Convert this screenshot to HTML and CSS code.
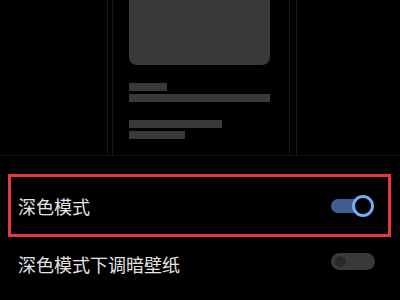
FILE: index.html
```html
<!DOCTYPE html>
<html lang="zh-CN">
<head>
    <meta charset="UTF-8">
    <title>深色模式</title>
    <link rel="stylesheet" href="styles.css">
</head>
<body>
    <!-- プレビュー -->
    <div class="preview">
        <div class="phone">
            <div class="screen">
                <div class="card"></div>
                <div class="bar bar-short"></div>
                <div class="bar bar-full"></div>
                <div class="bar bar-mid gap"></div>
                <div class="bar bar-small"></div>
            </div>
        </div>
    </div>

    <!-- 設定 -->
    <div class="settings">
        <div class="row highlight">
            <span class="label">深色模式</span>
            <div class="switch on"><span class="knob"></span></div>
        </div>
        <div class="row">
            <span class="label">深色模式下调暗壁纸</span>
            <div class="switch off"><span class="dot"></span></div>
        </div>
    </div>
</body>
</html>
```

FILE: styles.css
```css
body {
    margin: 0;
    padding: 0;
    width: 400px;
    height: 300px;
    overflow: hidden;
    background-color: #000;
    color: #e4e4e4;
    font-family: "Noto Sans CJK SC", "Noto Sans", sans-serif;
}

/* プレビュー */
.preview {
    height: 155px;
    border-bottom: 1px solid #101010;
    display: flex;
    padding-left: 107px;
}

.phone {
    width: 178px;
    border-left: 1px solid #1a1a1a;
    border-right: 1px solid #1a1a1a;
    padding: 0 6px 0 4px;
}

.screen {
    height: 100%;
    border-left: 1px solid #181818;
    border-right: 1px solid #181818;
    padding-left: 16px;
}

.card {
    width: 141px;
    height: 65px;
    background-color: #39393b;
    border-radius: 0 0 8px 8px;
}

.bar {
    height: 8px;
    background-color: #39393b;
    margin-top: 3px;
}

.bar-short {
    width: 38px;
    margin-top: 18px;
}

.bar-full {
    width: 141px;
}

.bar-mid {
    width: 93px;
}

.bar-small {
    width: 56px;
}

.bar.gap {
    margin-top: 18px;
}

/* 設定リスト */
.settings {
    padding: 18px 9px 0 8px;
}

.row {
    display: flex;
    align-items: center;
    justify-content: space-between;
    height: 54px;
    padding: 0 16px 0 10px;
}

.row.highlight {
    height: 57px;
    border: 3px solid #e8383d;
    padding: 0 14px 0 7px;
}

.label {
    font-size: 18px;
    line-height: 1;
}

/* スイッチ */
.switch {
    position: relative;
    width: 43px;
    height: 22px;
}

.switch.on::before {
    content: "";
    position: absolute;
    left: 0;
    top: 4px;
    width: 36px;
    height: 14px;
    border-radius: 7px;
    background-color: #3d5e8e;
}

.switch .knob {
    position: absolute;
    right: 0;
    top: 0;
    width: 16px;
    height: 16px;
    border: 3px solid #72acf2;
    border-radius: 50%;
    background-color: #000;
}

.switch.off {
    width: 44px;
    height: 17px;
    border-radius: 9px;
    background-color: #3a3a3a;
    margin-top: -5px;
}

.switch .dot {
    position: absolute;
    left: 4px;
    top: 3px;
    width: 11px;
    height: 11px;
    border-radius: 50%;
    background-color: #2a2a2a;
}
```
